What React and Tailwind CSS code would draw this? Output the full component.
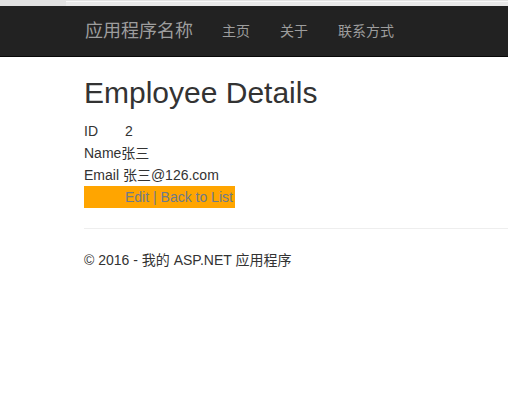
export default function App() {
  const font = { fontFamily: '"Liberation Sans", "Noto Sans CJK SC", Arial, sans-serif' };
  return (
    <div className="min-h-[394px] bg-white text-[14px] text-[#333]" style={font}>
      {/* browser strip */}
      <div className="flex h-[6px] bg-[#e2e2e2]">
        <div className="w-[66px]" />
        <div className="mt-px flex-1 border-t border-[#f8f8f8] bg-[#e9e9e9]" />
      </div>

      {/* navbar */}
      <nav className="flex h-[51px] items-center border-b border-[#080808] bg-[#222] pl-[85px] text-[#9d9d9d]">
        <span className="mr-[29px] text-[18px]">应用程序名称</span>
        <ul className="flex gap-[30px]">
          <li>主页</li>
          <li>关于</li>
          <li>联系方式</li>
        </ul>
      </nav>

      <div className="pl-[84px]">
        <h2 className="mt-[19px] mb-[11px] text-[30px] leading-[33px]">Employee Details</h2>
        <div className="leading-[22px]">
          <div className="flex">
            <span className="w-[41px]">ID</span>
            <span>2</span>
          </div>
          <div>Name张三</div>
          <div>Email 张三@126.com</div>
          <div className="flex h-[22px] w-[151px] items-center bg-[#ffa500] pl-[41px] text-[#6e7a8a]">
            Edit | Back to List
          </div>
        </div>
        <hr className="mt-[20px] mb-[20px] border-t border-[#eee]" />
        <footer className="leading-[22px]">© 2016 - 我的 ASP.NET 应用程序</footer>
      </div>
    </div>
  );
}
